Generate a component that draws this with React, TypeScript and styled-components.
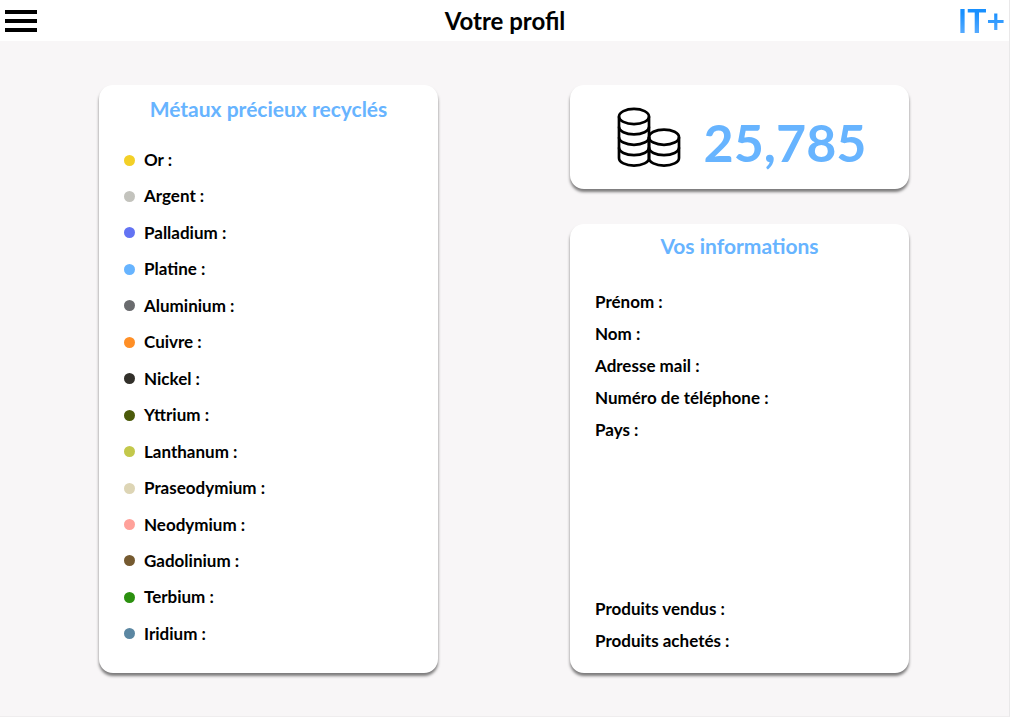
import React from "react";
import styled, { createGlobalStyle } from "styled-components";

const GlobalStyle = createGlobalStyle`
  * {
    box-sizing: border-box;
  }
  body {
    margin: 0;
    background: #f8f6f7;
    color: #000;
    font-family: Lato, "Open Sans", sans-serif;
    font-weight: 700;
  }
`;

const Page = styled.div`
  display: flex;
  flex-direction: column;
  min-height: 100vh;
  border-right: 1px solid #e9e8e9;
  border-bottom: 1px solid #efedee;
`;

const Header = styled.header`
  display: grid;
  grid-template-columns: 1fr auto 1fr;
  align-items: center;
  height: 41px;
  padding: 0 4px 0 5px;
  background: #fff;
`;

const MenuButton = styled.button`
  display: flex;
  flex-direction: column;
  justify-content: space-between;
  justify-self: start;
  width: 32px;
  height: 22px;
  padding: 0;
  border: 0;
  background: none;
  cursor: pointer;
`;

const MenuBar = styled.span`
  height: 4px;
  background: #000;
`;

const PageTitle = styled.h1`
  margin: 0;
  font-size: 24px;
  line-height: 28px;
  font-weight: 700;
`;

const Logo = styled.a`
  justify-self: end;
  font-size: 32px;
  line-height: 40px;
  font-weight: 700;
  text-decoration: none;
  color: transparent;
  background: linear-gradient(#1890ff 30%, #5cadff 85%);
  background-clip: text;
  -webkit-background-clip: text;
`;

const Main = styled.main`
  flex: 1;
  display: grid;
  grid-template-columns: 1fr 1fr;
  gap: 132px;
  padding: 44px 100px 43px 99px;
`;

const Column = styled.div`
  display: flex;
  flex-direction: column;
  gap: 35px;
`;

const Card = styled.section`
  display: flex;
  flex-direction: column;
  flex: 1;
  padding: 10px 25px 16px;
  border-radius: 14px;
  background: #fff;
  box-shadow: 0 3px 3px rgba(0, 0, 0, 0.5);
`;

const BalanceCard = styled.section`
  display: flex;
  align-items: center;
  justify-content: center;
  gap: 23px;
  height: 104px;
  padding-left: 4px;
  border-radius: 14px;
  background: #fff;
  box-shadow: 0 3px 3px rgba(0, 0, 0, 0.5);
`;

const Balance = styled.span`
  padding-top: 10px;
  font-size: 52px;
  line-height: 64px;
  color: #67b4ff;
`;

const CardTitle = styled.h2`
  margin: 0;
  font-size: 21px;
  line-height: 28px;
  font-weight: 700;
  text-align: center;
  color: #67b4ff;
`;

const MetalList = styled.ul`
  flex: 1;
  display: flex;
  flex-direction: column;
  justify-content: space-between;
  margin: 23px 0 9px;
  padding: 0;
  list-style: none;
`;

const MetalItem = styled.li`
  display: flex;
  align-items: center;
  gap: 9px;
  font-size: 17px;
  line-height: 28px;
`;

const Dot = styled.span<{ $color: string }>`
  width: 11px;
  height: 11px;
  border-radius: 50%;
  background: ${({ $color }) => $color};
`;

const InfoCard = styled(Card)`
  padding-top: 8px;
`;

const FieldList = styled.ul<{ $atBottom?: boolean }>`
  margin: ${({ $atBottom }) => ($atBottom ? "auto 0 0" : "26px 0 0")};
  padding: 0;
  list-style: none;
`;

const Field = styled.li`
  font-size: 17px;
  line-height: 32px;
`;

const metals = [
  { name: "Or", color: "#f3d027" },
  { name: "Argent", color: "#c3c3bd" },
  { name: "Palladium", color: "#6373f3" },
  { name: "Platine", color: "#67b4ff" },
  { name: "Aluminium", color: "#6a6b6e" },
  { name: "Cuivre", color: "#ff8f26" },
  { name: "Nickel", color: "#32302a" },
  { name: "Yttrium", color: "#4b5a0a" },
  { name: "Lanthanum", color: "#c3c84b" },
  { name: "Praseodymium", color: "#ddd5b5" },
  { name: "Neodymium", color: "#ffa19a" },
  { name: "Gadolinium", color: "#755a30" },
  { name: "Terbium", color: "#2b900f" },
  { name: "Iridium", color: "#5b87a2" },
];

const identity = ["Prénom", "Nom", "Adresse mail", "Numéro de téléphone", "Pays"];
const activity = ["Produits vendus", "Produits achetés"];

const CoinsIcon = () => (
  <svg width="64" height="60" viewBox="0 0 64 60" fill="none" stroke="#000" strokeWidth="2.7" aria-hidden="true">
    <ellipse cx="17" cy="9.5" rx="15" ry="7.6" />
    <path d="M2 9.5V51c0 4.2 6.7 7.6 15 7.6S32 55.2 32 51V9.5" />
    <path d="M2 19.8c0 4.2 6.7 7.6 15 7.6s15-3.4 15-7.6M2 30.2c0 4.2 6.7 7.6 15 7.6s15-3.4 15-7.6M2 40.6c0 4.2 6.7 7.6 15 7.6s15-3.4 15-7.6" />
    <ellipse cx="47" cy="30.2" rx="15" ry="7.6" />
    <path d="M32 30.2V51c0 4.2 6.7 7.6 15 7.6S62 55.2 62 51V30.2" />
    <path d="M32 40.6c0 4.2 6.7 7.6 15 7.6s15-3.4 15-7.6" />
  </svg>
);

export default function App() {
  return (
    <>
      <GlobalStyle />
      <Page>
        <Header>
          <MenuButton type="button" aria-label="Menu">
            <MenuBar />
            <MenuBar />
            <MenuBar />
          </MenuButton>
          <PageTitle>Votre profil</PageTitle>
          <Logo href="#">IT+</Logo>
        </Header>
        <Main>
          <Card>
            <CardTitle>Métaux précieux recyclés</CardTitle>
            <MetalList>
              {metals.map(({ name, color }) => (
                <MetalItem key={name}>
                  <Dot $color={color} />
                  {`${name} :`}
                </MetalItem>
              ))}
            </MetalList>
          </Card>
          <Column>
            <BalanceCard>
              <CoinsIcon />
              <Balance>25,785</Balance>
            </BalanceCard>
            <InfoCard>
              <CardTitle>Vos informations</CardTitle>
              <FieldList>
                {identity.map((label) => (
                  <Field key={label}>{`${label} :`}</Field>
                ))}
              </FieldList>
              <FieldList $atBottom>
                {activity.map((label) => (
                  <Field key={label}>{`${label} :`}</Field>
                ))}
              </FieldList>
            </InfoCard>
          </Column>
        </Main>
      </Page>
    </>
  );
}
